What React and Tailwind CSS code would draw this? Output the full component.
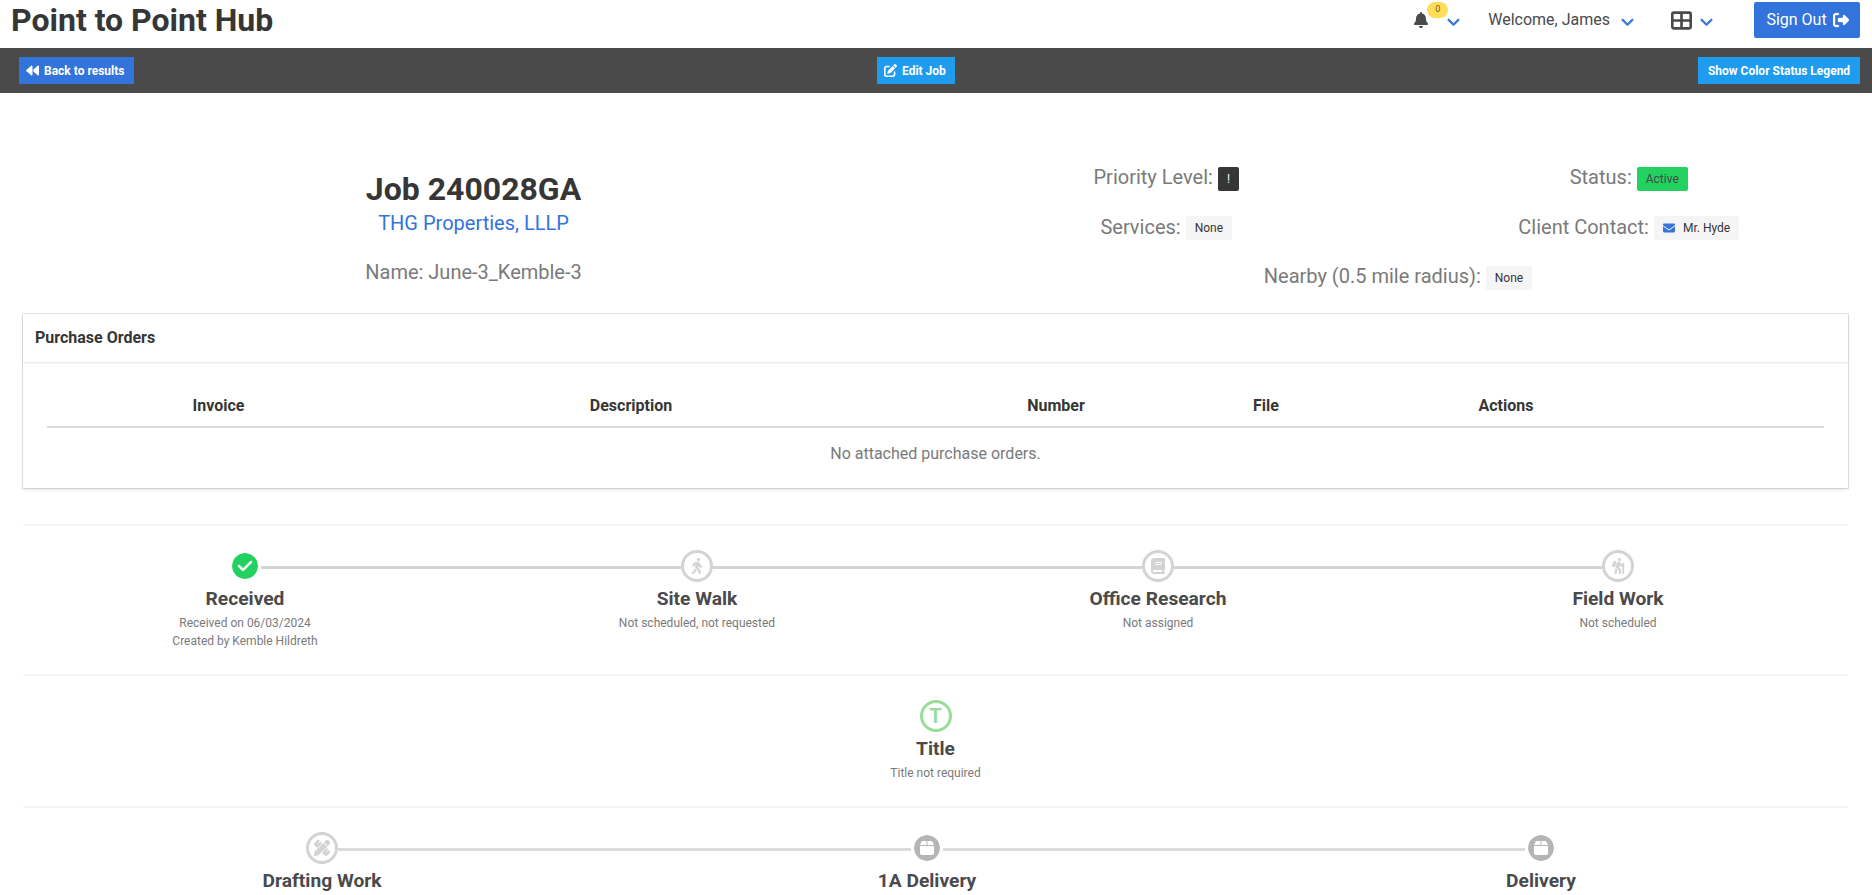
import {
  FaBackward,
  FaBell,
  FaBook,
  FaBox,
  FaCheck,
  FaChevronDown,
  FaEnvelope,
  FaPenRuler,
  FaPenToSquare,
  FaPersonHiking,
  FaPersonWalking,
  FaRightFromBracket,
  FaTableCellsLarge,
} from "react-icons/fa6";

const outline = "border-[#d3d3d3] bg-white text-[#d3d3d3]";
const packed = "border-white bg-[#b5b5b5] text-white";

const intake = [
  {
    title: "Received",
    notes: ["Received on 06/03/2024", "Created by Kemble Hildreth"],
    icon: <FaCheck size={16} stroke="currentColor" strokeWidth={20} />,
    marker: "border-white bg-[#23d160] text-white",
    width: "w-[444px]",
  },
  {
    title: "Site Walk",
    notes: ["Not scheduled, not requested"],
    icon: <FaPersonWalking size={16} stroke="currentColor" strokeWidth={16} />,
    marker: outline,
    width: "w-[460px]",
  },
  {
    title: "Office Research",
    notes: ["Not assigned"],
    icon: <FaBook size={16} />,
    marker: outline,
    width: "w-[462px]",
  },
  {
    title: "Field Work",
    notes: ["Not scheduled"],
    icon: <FaPersonHiking size={16} stroke="currentColor" strokeWidth={10} />,
    marker: outline,
    width: "w-[458px]",
  },
];

const titleSteps = [
  {
    title: "Title",
    notes: ["Title not required"],
    icon: <span className="text-xl leading-none font-bold">T</span>,
    marker: "border-[#97dc97] bg-white text-[#97dc97]",
    width: "w-full",
  },
];

const delivery = [
  {
    title: "Drafting Work",
    notes: [],
    icon: <FaPenRuler size={16} stroke="currentColor" strokeWidth={12} />,
    marker: outline,
    width: "w-[598px]",
  },
  {
    title: "1A Delivery",
    notes: [],
    icon: <FaBox size={16} />,
    marker: packed,
    width: "w-[612px]",
  },
  {
    title: "Delivery",
    notes: [],
    icon: <FaBox size={16} />,
    marker: packed,
    width: "w-[616px]",
  },
];

function Steps({ steps, line }) {
  return (
    <div className="flex border-t-2 border-[#f5f5f5] pt-6">
      {steps.map((step, i) => (
        <div key={step.title} className={`${step.width} shrink-0 text-center`}>
          <div className="flex items-center">
            <div className={`mt-[3px] h-[3px] flex-1 ${i > 0 ? line : ""}`} />
            <div
              className={`flex size-8 items-center justify-center rounded-full border-[3px] bg-clip-padding ${step.marker}`}
            >
              {step.icon}
            </div>
            <div
              className={`mt-[3px] h-[3px] flex-1 ${i < steps.length - 1 ? line : ""}`}
            />
          </div>
          <p className="mt-[3px] text-[19.2px] leading-7 font-bold text-[#4a4a4a]">
            {step.title}
          </p>
          <div className="pt-px text-xs leading-[18px] text-[#7a7a7a]">
            {step.notes.map((note) => (
              <p key={note}>{note}</p>
            ))}
          </div>
        </div>
      ))}
    </div>
  );
}

function Detail({ label, children, className = "" }) {
  return (
    <div
      className={`flex items-center justify-center gap-[5px] text-xl leading-[30px] text-[#7a7a7a] ${className}`}
    >
      <span>{label}</span>
      {children}
    </div>
  );
}

function Tag({ children, className = "mt-[3px] bg-[#f5f5f5] text-[#4a4a4a]" }) {
  return (
    <span
      className={`flex h-6 items-center rounded-[2px] px-[9px] text-xs ${className}`}
    >
      {children}
    </span>
  );
}

function Chevron({ className }) {
  return (
    <FaChevronDown
      size={13}
      stroke="currentColor"
      strokeWidth={32}
      className={`mt-[3px] text-[#3273dc] ${className}`}
    />
  );
}

function Header() {
  return (
    <header className="flex h-12 items-start justify-between pr-3 pl-[11px]">
      <h1 className="pt-[2px] text-[32px] leading-9 font-bold text-[#363636]">
        Point to Point Hub
      </h1>
      <div className="flex h-10 items-center text-[#4a4a4a]">
        <FaBell size={16} />
        <span className="-mt-5 -ml-[2px] flex h-4 w-[21px] items-center justify-center rounded-full bg-[#ffdd57] text-[9px] text-[#7a5a2a]">
          0
        </span>
        <Chevron className="-ml-px" />
        <span className="ml-7">Welcome, James</span>
        <Chevron className="ml-[11px]" />
        <FaTableCellsLarge size={21} className="ml-[37px]" />
        <Chevron className="ml-2" />
        <button className="ml-[41px] flex h-9 w-[106px] items-center justify-center gap-[6px] rounded-[2px] bg-[#3273dc] pl-px text-white">
          Sign Out
          <FaRightFromBracket size={16} stroke="currentColor" strokeWidth={12} />
        </button>
      </div>
    </header>
  );
}

function Toolbar() {
  return (
    <div className="flex h-[45px] items-center justify-between bg-[#4a4a4a] pr-3 pl-[19px] text-xs font-bold text-white">
      <button className="flex h-[27px] w-[115px] items-center gap-[5px] bg-[#3273dc] pl-[7px]">
        <FaBackward size={13} /> Back to results
      </button>
      <button className="flex h-[27px] w-[78px] items-center gap-[5px] bg-[#209cee] pl-[7px]">
        <FaPenToSquare size={13} /> Edit Job
      </button>
      <button className="h-[27px] w-[162px] bg-[#209cee]">
        Show Color Status Legend
      </button>
    </div>
  );
}

function PurchaseOrders() {
  return (
    <section className="h-[174px] shadow-[0_2px_3px_rgba(10,10,10,0.1),0_0_0_1px_rgba(10,10,10,0.1)]">
      <h3 className="h-12 px-3 leading-[48px] font-bold text-[#363636] shadow-[0_1px_2px_rgba(10,10,10,0.1)]">
        Purchase Orders
      </h3>
      <div className="px-6 pt-6">
        <div className="flex h-[42px] items-center border-b-2 border-[#dbdbdb] text-center font-bold text-[#363636]">
          <span className="w-[343px]">Invoice</span>
          <span className="w-[482px]">Description</span>
          <span className="w-[368px]">Number</span>
          <span className="w-[52px]">File</span>
          <span className="w-[428px]">Actions</span>
        </div>
        <p className="pt-[14px] text-center text-[#7a7a7a]">
          No attached purchase orders.
        </p>
      </div>
    </section>
  );
}

export default function App() {
  return (
    <div className="h-[895px] w-[1872px] overflow-hidden bg-white font-[Roboto,sans-serif] text-base">
      <Header />
      <Toolbar />
      <div className="flex h-[221px] px-3">
        <div className="w-[923px] pt-[78px] text-center">
          <h2 className="text-[32px] leading-9 font-bold text-[#363636]">
            Job 240028GA
          </h2>
          <p className="text-xl leading-8 text-[#3273dc]">
            THG Properties, LLLP
          </p>
          <p className="mt-[17px] text-xl leading-8 text-[#7a7a7a]">
            Name: June-3_Kemble-3
          </p>
        </div>
        <div className="grid flex-1 grid-cols-2 content-start gap-y-[19px] pt-[69px]">
          <Detail label="Priority Level:">
            <Tag className="mt-[3px] bg-[#363636] text-[#f5f5f5]">!</Tag>
          </Detail>
          <Detail label="Status:">
            <Tag className="mt-[3px] bg-[#23d160] text-[#4a4a4a]">Active</Tag>
          </Detail>
          <Detail label="Services:" className="mt-px">
            <Tag className="mt-px bg-[#f5f5f5] text-[#363636]">None</Tag>
          </Detail>
          <Detail label="Client Contact:" className="mt-px">
            <Tag className="mt-px bg-[#f5f5f5] text-[#363636]">
              <FaEnvelope size={12} className="mr-2 text-[#3273dc]" /> Mr. Hyde
            </Tag>
          </Detail>
          <Detail label="Nearby (0.5 mile radius):" className="col-span-2 pl-px">
            <Tag className="mt-[3px] bg-[#f5f5f5] text-[#363636]">None</Tag>
          </Detail>
        </div>
      </div>
      <main className="mr-6 ml-[23px]">
        <PurchaseOrders />
        <div className="h-9" />
        <div className="h-[150px]">
          <Steps steps={intake} line="bg-[#d3d3d3]" />
        </div>
        <div className="h-[132px]">
          <Steps steps={titleSteps} line="" />
        </div>
        <Steps steps={delivery} line="bg-[#dbdbdb]" />
      </main>
    </div>
  );
}
